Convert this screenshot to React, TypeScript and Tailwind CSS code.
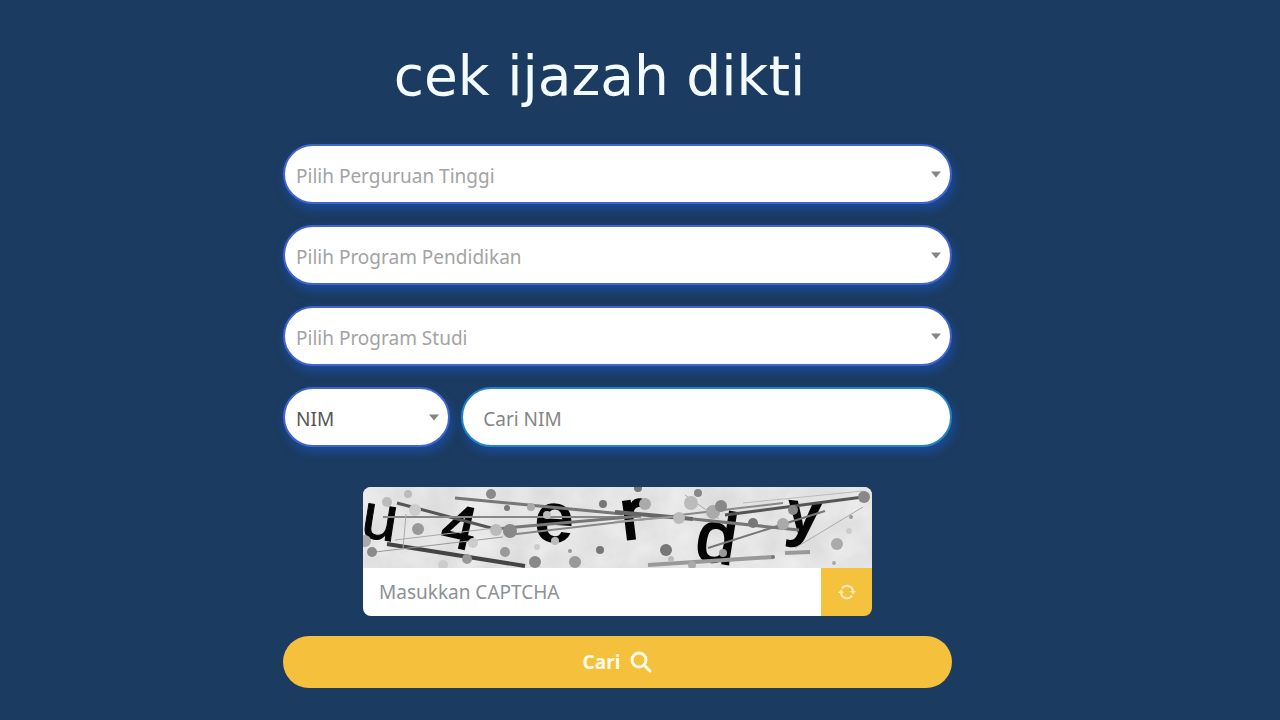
import React, { useState } from 'react';

interface SelectFieldProps {
  id: string;
  label: string;
  options: string[];
  muted?: boolean;
  className?: string;
}

// Pill shaped dropdown with its own arrow
const SelectField: React.FC<SelectFieldProps> = ({ id, label, options, muted, className }) => (
  <div className={`relative ${className || 'w-full'}`}>
    <label htmlFor={id} className="sr-only">{label}</label>
    <select
      id={id}
      className={`block w-full h-[60px] appearance-none rounded-full border-2 border-[#4264cf] bg-white pl-[11px] pr-8 pt-1 text-[19px] shadow-[2px_5px_8px_1px_#1b4a94] outline-none ${muted ? 'text-[#a3a3a3]' : 'text-[#555555]'}`}
    >
      {options.map((option) => (
        <option key={option}>{option}</option>
      ))}
    </select>
    <svg
      className="pointer-events-none absolute right-[11px] top-[27px]"
      width="10"
      height="7"
      viewBox="0 0 10 7"
      aria-hidden="true"
    >
      <path d="M0 0.5h10L5 6.5z" fill="#868686" />
    </svg>
  </div>
);

// x1, y1, x2, y2, width, color
const lines: [number, number, number, number, number, string][] = [
  [34, 16, 132, 42, 3, '#555'],
  [92, 11, 260, 27, 3, '#777'],
  [20, 30, 262, 30, 2, '#888'],
  [24, 57, 162, 79, 4, '#444'],
  [12, 65, 140, 50, 1, '#999'],
  [32, 53, 132, 41, 1, '#aaa'],
  [132, 42, 278, 29, 3, '#777'],
  [145, 48, 420, 16, 2, '#888'],
  [43, 27, 40, 62, 1, '#aaa'],
  [252, 25, 330, 32, 4, '#666'],
  [330, 32, 436, 43, 3, '#777'],
  [362, 28, 500, 10, 3, '#555'],
  [252, 35, 318, 29, 2, '#999'],
  [345, 61, 462, 24, 2, '#777'],
  [285, 78, 410, 70, 4, '#999'],
  [422, 66, 447, 65, 4, '#999'],
  [432, 61, 500, 20, 1, '#aaa'],
  [322, 8, 356, 32, 1, '#aaa'],
  [380, 16, 500, 4, 1, '#bbb'],
];

// cx, cy, r, color
const dots: [number, number, number, string][] = [
  [24, 15, 5, '#bbb'],
  [45, 7, 4, '#bbb'],
  [55, 42, 6, '#999'],
  [9, 65, 5, '#8a8a8a'],
  [2, 54, 6, '#aaa'],
  [52, 23, 6, '#ccc'],
  [128, 7, 5, '#8a8a8a'],
  [144, 21, 3, '#777'],
  [110, 56, 5, '#ccc'],
  [142, 65, 5, '#999'],
  [104, 72, 5, '#999'],
  [80, 78, 5, '#ccc'],
  [147, 44, 7, '#888'],
  [133, 43, 6, '#bbb'],
  [168, 20, 4, '#aaa'],
  [172, 75, 6, '#888'],
  [212, 75, 6, '#999'],
  [174, 60, 3, '#ccc'],
  [207, 64, 2, '#999'],
  [184, 28, 4, '#bbb'],
  [192, 54, 4, '#bbb'],
  [240, 17, 4, '#777'],
  [237, 63, 4, '#777'],
  [275, 1, 4, '#777'],
  [282, 17, 6, '#aaa'],
  [303, 63, 6, '#777'],
  [308, 72, 3, '#bbb'],
  [316, 31, 6, '#bbb'],
  [328, 16, 7, '#bbb'],
  [335, 6, 4, '#888'],
  [350, 25, 7, '#aaa'],
  [358, 19, 6, '#888'],
  [329, 78, 4, '#aaa'],
  [360, 66, 4, '#999'],
  [390, 36, 5, '#777'],
  [420, 37, 6, '#aaa'],
  [430, 23, 5, '#888'],
  [410, 70, 2, '#777'],
  [501, 10, 6, '#888'],
  [474, 57, 6, '#aaa'],
  [486, 44, 3, '#ccc'],
  [488, 30, 2, '#999'],
  [471, 76, 2, '#aaa'],
];

const CaptchaImage: React.FC = () => (
  <svg
    className="block w-full h-[81px]"
    viewBox="0 0 509 81"
    preserveAspectRatio="xMidYMid slice"
    role="img"
    aria-label="CAPTCHA"
  >
    <defs>
      <filter id="paper" x="0" y="0" width="100%" height="100%">
        <feTurbulence type="fractalNoise" baseFrequency="0.03" numOctaves="4" seed="4" />
        <feColorMatrix values="0.2 0 0 0 0.68  0.2 0 0 0 0.68  0.2 0 0 0 0.68  0 0 0 0 1" />
      </filter>
    </defs>
    <rect width="509" height="81" fill="#dcdcdc" />
    <rect width="509" height="81" filter="url(#paper)" />
    <g className="font-['Liberation_Sans']" fill="#050505" textAnchor="middle">
      <text transform="translate(14 52) rotate(9)" fontSize="64" stroke="#050505">u</text>
      <text transform="translate(92 60) rotate(13)" fontSize="60" stroke="#050505" strokeWidth="2">4</text>
      <text transform="translate(190 55) rotate(3)" fontSize="72" fontWeight="bold">e</text>
      <text transform="translate(272 51) rotate(-7)" fontSize="70" stroke="#050505" strokeWidth="3">r</text>
      <text transform="translate(350 75) rotate(9)" fontSize="72" stroke="#050505" strokeWidth="2">d</text>
      <text
        className="font-['Noto_Sans']"
        transform="translate(439 47) rotate(6)"
        fontSize="60"
        fontWeight="bold"
      >
        y
      </text>
    </g>
    {lines.map(([x1, y1, x2, y2, width, color], i) => (
      <line key={i} x1={x1} y1={y1} x2={x2} y2={y2} strokeWidth={width} stroke={color} />
    ))}
    {dots.map(([cx, cy, r, color], i) => (
      <circle key={i} cx={cx} cy={cy} r={r} fill={color} />
    ))}
  </svg>
);

const App: React.FC = () => {
  const [keyword, setKeyword] = useState('');
  const [captcha, setCaptcha] = useState('');

  return (
    <div className="min-h-screen bg-[#1b3b60] pl-4 pr-[61px] pb-8 font-['Noto_Sans',sans-serif]">
      <main className="mx-auto max-w-[669px]">
        {/* Title */}
        <h1 className="pt-10 pr-9 text-center font-['DejaVu_Sans',sans-serif] text-[55px] leading-[72px] text-[#f4fbff]">
          cek ijazah dikti
        </h1>

        <form className="mt-8" onSubmit={(e) => e.preventDefault()}>
          <div className="flex flex-col gap-[21px]">
            <SelectField id="pt" label="Perguruan Tinggi" options={['Pilih Perguruan Tinggi']} muted />
            <SelectField id="program" label="Program Pendidikan" options={['Pilih Program Pendidikan']} muted />
            <SelectField id="prodi" label="Program Studi" options={['Pilih Program Studi']} muted />

            <div className="flex gap-[11px]">
              <SelectField id="jenis" label="Cari berdasarkan" options={['NIM']} className="w-1/4 shrink-0" />
              <label htmlFor="keyword" className="sr-only">Cari NIM</label>
              <input
                id="keyword"
                type="text"
                value={keyword}
                onChange={(e) => setKeyword(e.target.value)}
                placeholder="Cari NIM"
                className="h-[60px] min-w-0 flex-1 rounded-full border-2 border-[#2185c5] bg-white px-5 pt-1 text-[19px] text-[#555555] shadow-[2px_5px_8px_1px_#1b4a94] outline-none placeholder:text-[#858585]"
              />
            </div>
          </div>

          {/* Captcha */}
          <div className="mx-auto mt-10 max-w-[509px] overflow-hidden rounded-lg">
            <CaptchaImage />
            <div className="flex h-12">
              <label htmlFor="captcha" className="sr-only">Masukkan CAPTCHA</label>
              <input
                id="captcha"
                type="text"
                value={captcha}
                onChange={(e) => setCaptcha(e.target.value)}
                placeholder="Masukkan CAPTCHA"
                className="min-w-0 flex-1 bg-white px-4 text-[19px] text-[#555555] outline-none placeholder:text-[#8c9196]"
              />
              <button
                type="button"
                aria-label="Muat ulang"
                className="flex w-[51px] items-center justify-center bg-[#f4c23d]"
              >
                <svg width="18" height="16" viewBox="0 0 18 16" fill="none" stroke="#fdeec0" strokeWidth="2">
                  <path d="M4 4.500A6 6 0 0 1 15 7.500" />
                  <path d="M14 11.500A6 6 0 0 1 3 8.500" />
                  <path d="M12.200 7h5.600L15 10.500z" fill="#fdeec0" stroke="none" />
                  <path d="M0.200 9h5.600L3 5.500z" fill="#fdeec0" stroke="none" />
                </svg>
              </button>
            </div>
          </div>

          <button
            type="submit"
            className="mt-5 flex h-[52px] w-full items-center justify-center gap-[10px] rounded-full bg-[#f5c13d] text-[19px] font-bold text-[#fffae8]"
          >
            Cari
            <svg width="22" height="22" viewBox="0 0 22 22" fill="none" stroke="#fffae8" aria-hidden="true">
              <circle cx="9" cy="9" r="7" strokeWidth="3" />
              <path d="M14 14l6 6" strokeWidth="3" strokeLinecap="round" />
            </svg>
          </button>
        </form>
      </main>
    </div>
  );
};

export default App;
